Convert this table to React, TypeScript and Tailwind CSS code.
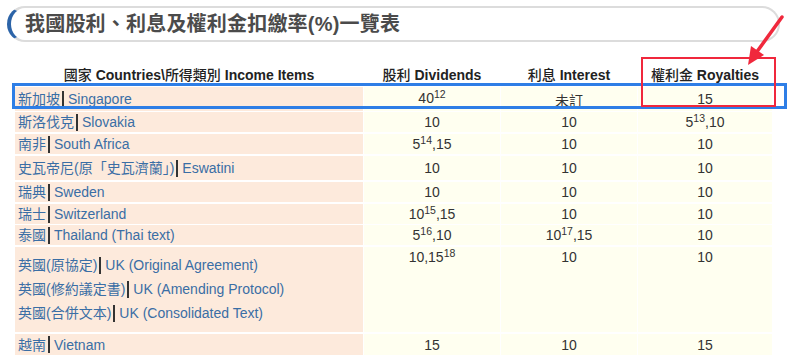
import React from "react";

type Row = {
  lines: { zh: string; en: string }[];
  d: React.ReactNode[];
  h: string;
  mt: string;
  tall?: boolean;
};

const S = ({ b, s, a }: { b: string; s: string; a?: string }) => (
  <span>
    {b}
    <sup>{s}</sup>
    {a}
  </span>
);

const rows: Row[] = [
  { lines: [{ zh: "斯洛伐克", en: "Slovakia" }], d: ["10", "10", <S b="5" s="13" a=",10" />], h: "h-[20px]", mt: "mt-[5px]" },
  { lines: [{ zh: "南非", en: "South Africa" }], d: [<S b="5" s="14" a=",15" />, "10", "10"], h: "h-[20px]", mt: "mt-[2px]" },
  { lines: [{ zh: "史瓦帝尼(原「史瓦濟蘭」)", en: "Eswatini" }], d: ["10", "10", "10"], h: "h-[24px]", mt: "mt-[2px]" },
  { lines: [{ zh: "瑞典", en: "Sweden" }], d: ["10", "10", "10"], h: "h-[20px]", mt: "mt-[2px]" },
  { lines: [{ zh: "瑞士", en: "Switzerland" }], d: [<S b="10" s="15" a=",15" />, "10", "10"], h: "h-[19px]", mt: "mt-[2px]" },
  { lines: [{ zh: "泰國", en: "Thailand (Thai text)" }], d: [<S b="5" s="16" a=",10" />, <S b="10" s="17" a=",15" />, "10"], h: "h-[20px]", mt: "mt-[2px]" },
  {
    lines: [
      { zh: "英國(原協定)", en: "UK (Original Agreement)" },
      { zh: "英國(修約議定書)", en: "UK (Amending Protocol)" },
      { zh: "英國(合併文本)", en: "UK (Consolidated Text)" },
    ],
    d: [<S b="10,15" s="18" />, "10", "10"],
    h: "h-[85px]",
    mt: "mt-[2px]",
    tall: true,
  },
  { lines: [{ zh: "越南", en: "Vietnam" }], d: ["15", "10", "15"], h: "h-[21px]", mt: "mt-[2px]" },
];

const Bar = () => <span className="inline-block w-[2px] h-[17px] bg-[#333] ml-[2px] mr-[4px]" />;

const Country = ({ zh, en }: { zh: string; en: string }) => (
  <span className="flex items-center whitespace-nowrap">
    <span>{zh}</span>
    <Bar />
    <span>{en}</span>
  </span>
);

const grid = "grid grid-cols-[348px_136px_136px_134px] gap-x-[1px]";

export default function App() {
  return (
    <div className="relative w-[800px] h-[358px] bg-white overflow-hidden font-['Liberation_Sans','Noto_Sans_CJK_TC',sans-serif] text-[14px] leading-[20px]">
      {/* Title */}
      <div className="ml-[7px] mt-[6px] w-[773px] h-[36px] rounded-[18px] border-2 border-[#dcdcdc] border-l-4 border-l-[#2c64a8] flex items-center pl-[14px]">
        <span className="text-[20px] font-bold text-[#4b4b4b] tracking-[0.2px]">我國股利、利息及權利金扣繳率(%)一覽表</span>
      </div>

      {/* Table */}
      <div className="ml-[15px] mt-[23px] flex flex-col">
        <div className={`${grid} h-[20px] text-[#222]`}>
          <div className="flex items-center justify-center whitespace-nowrap">
            <span className="font-medium">國家</span>
            <span className="font-bold">&nbsp;Countries\</span>
            <span className="font-medium">所得類別</span>
            <span className="font-bold">&nbsp;Income Items</span>
          </div>
          <div className="flex items-center justify-center whitespace-nowrap">
            <span className="font-medium">股利</span>
            <span className="font-bold">&nbsp;Dividends</span>
          </div>
          <div className="flex items-center justify-center whitespace-nowrap">
            <span className="font-medium">利息</span>
            <span className="font-bold">&nbsp;Interest</span>
          </div>
          <div className="flex items-center justify-center whitespace-nowrap">
            <span className="font-medium">權利金</span>
            <span className="font-bold">&nbsp;Royalties</span>
          </div>
        </div>

        {/* Singapore */}
        <div className={`${grid} h-[20px] mt-[2px]`}>
          <div className="flex items-center pl-[3px] bg-[#fdeadc] text-[#3a6ea5]">
            <Country zh="新加坡" en="Singapore" />
          </div>
          <div className="flex items-center justify-center bg-[#fffff0] text-[#333] pb-[2px]">
            <S b="40" s="12" />
          </div>
          <div className="flex items-center justify-center bg-[#fffff0] text-[#333] pt-[4px]">未訂</div>
          <div className="flex items-center justify-center bg-[#fffff0] text-[#333]">15</div>
        </div>

        {rows.map((r, i) => (
          <div key={i} className={`${grid} ${r.h} ${r.mt}`}>
            {r.tall ? (
              <div className="flex flex-col pl-[3px] pt-[6px] bg-[#fdeadc] text-[#3a6ea5]">
                {r.lines.map((l, j) => (
                  <div key={j} className="h-[24px] flex items-center">
                    <Country zh={l.zh} en={l.en} />
                  </div>
                ))}
              </div>
            ) : (
              <div className="flex items-center pl-[3px] bg-[#fdeadc] text-[#3a6ea5]">
                <Country zh={r.lines[0].zh} en={r.lines[0].en} />
              </div>
            )}
            {r.d.map((v, j) => (
              <div
                key={j}
                className={
                  r.tall
                    ? "flex items-start justify-center bg-[#fffff0] text-[#333]"
                    : "flex items-center justify-center bg-[#fffff0] text-[#333]"
                }
              >
                {v}
              </div>
            ))}
          </div>
        ))}
      </div>

      {/* Highlight overlays */}
      <div className="absolute left-[12px] top-[83px] w-[775px] h-[26px] border-[3px] border-[#2e7ee6] pointer-events-none" />
      <div className="absolute left-[641px] top-[57px] w-[135px] h-[50px] border-2 border-[#f0283c] pointer-events-none" />
      <svg className="absolute left-0 top-0 pointer-events-none" width="800" height="358" viewBox="0 0 800 358">
        <line x1="782" y1="17" x2="756" y2="53" stroke="#f0283c" strokeWidth="3.5" strokeLinecap="round" />
        <polygon points="748,65 751,46 764,55" fill="#f0283c" />
      </svg>
    </div>
  );
}
